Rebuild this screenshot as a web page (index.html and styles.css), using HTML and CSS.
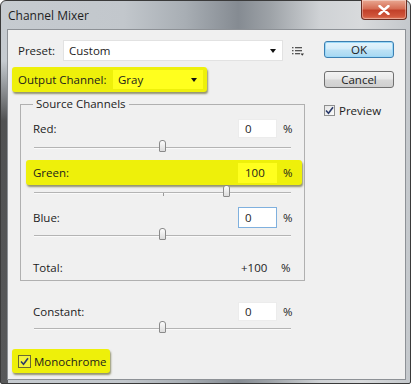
FILE: index.html
```html
<!DOCTYPE html>
<html lang="en">
  <head>
    <meta charset="UTF-8" />
    <title>Channel Mixer</title>
    <link rel="stylesheet" href="styles.css">
  </head>
  <body>
    <div class="window">
      <div class="titlebar">
        <span class="title">Channel Mixer</span>
        <button class="close" type="button">
          <svg viewBox="0 0 12 10" width="12" height="10">
            <path d="M1.5 1 L10.5 9 M10.5 1 L1.5 9" stroke="#fff" stroke-width="2.4" stroke-linecap="round" />
          </svg>
        </button>
      </div>

      <div class="client">
        <div class="main">
          <div class="preset-row">
            <label class="preset-label">Preset:</label>
            <div class="select preset-select">
              <span>Custom</span>
              <i class="caret"></i>
            </div>
            <svg class="menu-icon" viewBox="0 0 12 10" width="12" height="10">
              <rect x="0" y="1" width="1.5" height="1.3" fill="#555" />
              <rect x="3" y="1" width="7" height="1.3" fill="#555" />
              <rect x="0" y="4" width="1.5" height="1.3" fill="#555" />
              <rect x="3" y="4" width="7" height="1.3" fill="#555" />
              <rect x="0" y="7" width="1.5" height="1.3" fill="#555" />
              <rect x="3" y="7" width="5" height="1.3" fill="#555" />
              <path d="M8.5 7.5 H12 L10.25 9.8 Z" fill="#333" />
            </svg>
          </div>

          <div class="highlight output-row">
            <label class="output-label">Output Channel:</label>
            <div class="select hl-select">
              <span>Gray</span>
              <i class="caret"></i>
            </div>
          </div>

          <fieldset class="group">
            <legend>Source Channels</legend>

            <div class="channel red-row">
              <span class="channel-label">Red:</span>
              <span class="field">0</span>
              <span class="pct">%</span>
            </div>
            <div class="slider red-slider">
              <div class="track"><span class="thumb" style="left: 50%"></span></div>
            </div>

            <div class="channel highlight green-row">
              <span class="channel-label">Green:</span>
              <span class="field hl-field">100</span>
              <span class="pct">%</span>
            </div>
            <div class="slider green-slider">
              <div class="track">
                <span class="tick" style="left: 50%"></span>
                <span class="thumb" style="left: 75%"></span>
              </div>
            </div>

            <div class="channel blue-row">
              <span class="channel-label">Blue:</span>
              <span class="field focused">0</span>
              <span class="pct">%</span>
            </div>
            <div class="slider blue-slider">
              <div class="track"><span class="thumb" style="left: 50%"></span></div>
            </div>

            <div class="channel total-row">
              <span class="channel-label">Total:</span>
              <span class="total-value">+100</span>
              <span class="pct">%</span>
            </div>
          </fieldset>

          <div class="channel constant-row">
            <span class="channel-label">Constant:</span>
            <span class="field">0</span>
            <span class="pct">%</span>
          </div>
          <div class="slider constant-slider">
            <div class="track"><span class="thumb" style="left: 50%"></span></div>
          </div>

          <div class="highlight mono-row">
            <span class="checkbox">
              <svg viewBox="0 0 9 9" width="9" height="9">
                <path d="M1 4.5 L3.5 7.2 L8 1.2" fill="none" stroke="#2a3a6a" stroke-width="1.6" />
              </svg>
            </span>
            <span>Monochrome</span>
          </div>
        </div>

        <div class="side">
          <button class="btn btn-default" type="button">OK</button>
          <button class="btn" type="button">Cancel</button>
          <div class="preview-row">
            <span class="checkbox">
              <svg viewBox="0 0 9 9" width="9" height="9">
                <path d="M1 4.5 L3.5 7.2 L8 1.2" fill="none" stroke="#2a3a6a" stroke-width="1.6" />
              </svg>
            </span>
            <span>Preview</span>
          </div>
        </div>
      </div>
    </div>
  </body>
</html>
```

FILE: styles.css
```css
body {
  margin: 0;
  padding: 0;
  background: #fff;
  font-family: "Open Sans", "Noto Sans", sans-serif;
  font-size: 11.5px;
  color: #1c1c1c;
}

.window {
  width: 411px;
  height: 384px;
  box-sizing: border-box;
  display: flex;
  flex-direction: column;
  border: 1px solid #3a3a3a;
  border-radius: 6px 6px 2px 2px;
  background:
    linear-gradient(to bottom, rgba(0, 0, 0, 0) 60px, rgba(40, 40, 40, 0.75) 120px, rgba(60, 60, 60, 0.8) 100%) left top / 7px 100% no-repeat,
    linear-gradient(to right, #c6cbd0 0%, #c2c7cc 30%, #a8aeb4 45%, #858b92 58%, #9ea3a8 66%, #cfd2d5 78%, #d8dadc 88%, #c4c8cc 100%);
}

.titlebar {
  height: 28px;
  display: flex;
  align-items: center;
  padding-left: 7px;
}

.title {
  font-size: 12px;
  color: #1e1e1e;
}

.close {
  margin-left: auto;
  margin-right: 3px;
  align-self: flex-start;
  width: 46px;
  height: 20px;
  margin-top: -1px;
  border: 1px solid #6a2d22;
  border-top: none;
  border-radius: 0 0 4px 4px;
  background: linear-gradient(to bottom, #e9a892 0%, #d66e55 45%, #c2412a 55%, #d0553b 85%, #e07a5c 100%);
  box-shadow: inset 0 0 0 1px rgba(255, 255, 255, 0.35);
  display: flex;
  align-items: center;
  justify-content: center;
  padding: 0;
}

.client {
  margin: 0 4px 0 6px;
  height: 351px;
  box-sizing: border-box;
  border: 1px solid #8d9196;
  background: #f0f0f0;
  display: flex;
  padding: 10px 0 0 4px;
}

.main {
  width: 294px;
  display: flex;
  flex-direction: column;
}

.preset-row {
  height: 21px;
  display: flex;
  align-items: center;
  padding-left: 6px;
}

.preset-label {
  width: 45px;
}

.select {
  box-sizing: border-box;
  display: flex;
  align-items: center;
  padding: 0 6px 0 5px;
}

.select span {
  flex: 1;
}

.preset-select {
  width: 220px;
  height: 21px;
  background: #fff;
  border: 1px solid #e2e2e2;
}

.caret {
  width: 0;
  height: 0;
  border-left: 3.5px solid transparent;
  border-right: 3.5px solid transparent;
  border-top: 4px solid #111;
}

.menu-icon {
  margin-left: 9px;
}

.highlight {
  background: #eef00a;
  border-radius: 3px;
  box-shadow: 1px 2px 2px rgba(70, 70, 0, 0.55);
}

.output-row {
  margin-top: 6px;
  width: 195px;
  height: 25px;
  box-sizing: border-box;
  padding-left: 6px;
  display: flex;
  align-items: center;
}

.output-label {
  width: 95px;
}

.hl-select {
  width: 90px;
  height: 19px;
  background: #ffff1e;
}

.group {
  margin: 4px 0 0 8px;
  width: 285px;
  box-sizing: border-box;
  border: 1px solid #b0b0b0;
  padding: 0 7px 3px 12px;
  display: flex;
  flex-direction: column;
}

.group legend {
  margin-left: 0;
  padding: 0 3px;
  line-height: 16px;
}

.channel {
  display: flex;
  align-items: center;
}

.channel-label {
  flex: 1;
}

.field {
  width: 39px;
  box-sizing: border-box;
  height: 19px;
  background: #fff;
  border: 1px solid #ececec;
  padding-left: 6px;
  display: flex;
  align-items: center;
}

.hl-field {
  height: 20px;
  background: #ffff1e;
  border-color: #ffff1e;
}

.focused {
  height: 21px;
  border-color: #7fb0de;
}

.pct {
  width: 14px;
  margin-left: 6px;
}

.red-row {
  margin-top: 6px;
  height: 21px;
}

.green-row {
  margin: 3px -5px 0 -7px;
  padding: 0 5px 0 7px;
  height: 25px;
}

.blue-row {
  margin-top: 5px;
  height: 23px;
}

.total-row {
  margin-top: 14px;
  height: 20px;
}

.total-value {
  width: 39px;
  padding-left: 3px;
  box-sizing: border-box;
}

.total-row .pct {
  margin-left: 4px;
  width: 16px;
}

.slider {
  display: flex;
  align-items: center;
  padding: 0 6px 0 1px;
}

.red-slider {
  height: 18px;
}

.green-slider {
  height: 16px;
}

.blue-slider,
.constant-slider {
  height: 14px;
}

.track {
  position: relative;
  flex: 1;
  height: 1px;
  background: #b4b4b4;
  border-bottom: 1px solid #fafafa;
}

.thumb {
  position: absolute;
  top: -7px;
  width: 7px;
  height: 12px;
  margin-left: -4px;
  box-sizing: border-box;
  border: 1px solid #8a8a8a;
  border-radius: 3px 3px 1px 1px;
  background: linear-gradient(to bottom, #fdfdfd, #dcdcdc);
}

.tick {
  position: absolute;
  top: 1px;
  width: 1px;
  height: 3px;
  background: #9a9a9a;
}

.constant-row {
  margin-top: 19px;
  height: 22px;
  padding: 0 9px 0 21px;
}

.constant-slider {
  padding: 0 15px 0 22px;
}

.mono-row {
  margin-top: 13px;
  width: 98px;
  height: 24px;
  box-sizing: border-box;
  padding-left: 6px;
  display: flex;
  align-items: center;
  gap: 3px;
}

.checkbox {
  width: 13px;
  height: 13px;
  box-sizing: border-box;
  border: 1px solid #8e8f8f;
  background: linear-gradient(to bottom right, #e6e6e6, #fafafa);
  display: inline-flex;
  align-items: center;
  justify-content: center;
}

.mono-row .checkbox {
  background: #f2f23a;
  border-color: #6b6b30;
}

.side {
  margin-left: 18px;
  width: 70px;
  display: flex;
  flex-direction: column;
}

.btn {
  height: 17px;
  margin-top: 13px;
  padding: 0;
  font-family: "Open Sans", "Noto Sans", sans-serif;
  font-size: 11.5px;
  color: #1c1c1c;
  border: 1px solid #707070;
  border-radius: 3px;
  background: linear-gradient(to bottom, #f4f4f4 0%, #e8e8e8 48%, #d8d8d8 52%, #cfcfcf 100%);
  line-height: 15px;
}

.btn-default {
  margin-top: 1px;
  border-color: #3c7fb1;
  background: linear-gradient(to bottom, #e6f4fc 0%, #d4ecfa 48%, #bde2f6 52%, #a7d8f2 100%);
  box-shadow: inset 0 0 0 1px #9ad8f8;
}

.preview-row {
  margin-top: 15px;
  display: flex;
  align-items: center;
  gap: 4px;
}

.preview-row .checkbox {
  width: 11px;
  height: 11px;
}
```
